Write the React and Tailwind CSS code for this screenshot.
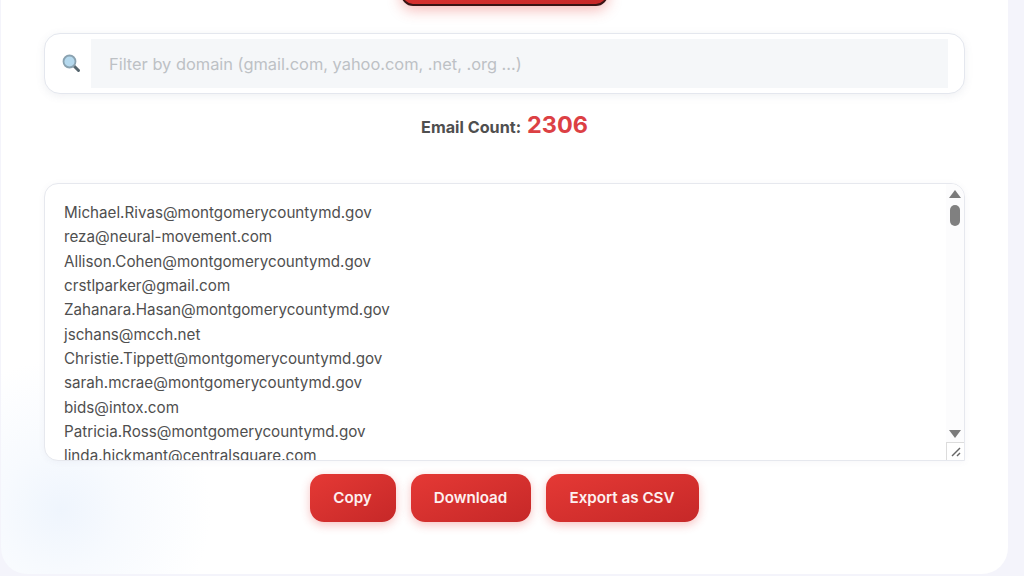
import { useState } from 'react';

const emails = [
  'Michael.Rivas@montgomerycountymd.gov',
  'reza@neural-movement.com',
  'Allison.Cohen@montgomerycountymd.gov',
  'crstlparker@gmail.com',
  'Zahanara.Hasan@montgomerycountymd.gov',
  'jschans@mcch.net',
  'Christie.Tippett@montgomerycountymd.gov',
  'sarah.mcrae@montgomerycountymd.gov',
  'bids@intox.com',
  'Patricia.Ross@montgomerycountymd.gov',
  'linda.hickmant@centralsquare.com',
];

const buttons = [
  { label: 'Copy', width: 'w-[86px]' },
  { label: 'Download', width: 'w-[120px]' },
  { label: 'Export as CSV', width: 'w-[153px]' },
];

const SearchEmoji = () => (
  <svg width="20" height="20" viewBox="0 0 20 20" className="mt-[-2px]">
    <line x1="12.5" y1="12.5" x2="17.5" y2="17.5" stroke="#56666e" strokeWidth="3" strokeLinecap="round" />
    <circle cx="8.5" cy="8.5" r="6" fill="#b5d9ee" stroke="#8aa2b0" strokeWidth="1.8" />
  </svg>
);

const App = () => {
  const [filter, setFilter] = useState('');

  return (
    <div className="h-[576px] w-[1024px] overflow-hidden bg-[#f4f4fb] font-['Inter',sans-serif]">
      {/* Main card */}
      <div className="ml-[1px] flex h-[574px] w-[1007px] flex-col items-center rounded-b-[26px] bg-white bg-[radial-gradient(circle_at_60px_510px,#eff5fd_0%,#f7fafe_60px,#ffffff_150px)] px-[43px]">
        <button className="ml-[-1px] mt-[-40px] h-[46px] w-[207px] shrink-0 rounded-[12px] border-2 border-[#3a1414] bg-gradient-to-br from-[#e53935] to-[#c62828] shadow-[0_4px_14px_rgba(229,57,53,0.35)]" />

        {/* Filter */}
        <div className="mt-[27px] flex h-[61px] w-[921px] shrink-0 items-center rounded-[16px] border border-[#e4e7ee] bg-white pl-[16px] pr-[16px] shadow-[0_2px_8px_rgba(100,110,140,0.1)]">
          <SearchEmoji />
          <input
            value={filter}
            onChange={(e) => setFilter(e.target.value)}
            placeholder="Filter by domain (gmail.com, yahoo.com, .net, .org ...)"
            className="ml-[10px] h-[49px] flex-1 bg-[#f5f7f9] pl-[18px] text-[16.4px] text-gray-700 outline-none placeholder:text-[#bdc1c5]"
          />
        </div>

        {/* Count */}
        <div className="mt-[15px] flex h-[32px] shrink-0 items-baseline gap-[6px]">
          <span className="text-[16.2px] font-bold text-[#4f4f4f]">Email Count:</span>
          <span className="text-[23.4px] font-bold leading-[32px] text-[#dc4044]">2306</span>
        </div>

        {/* List */}
        <div className="relative mt-[42px] h-[278px] w-[921px] shrink-0 overflow-hidden rounded-tl-[14px] rounded-tr-[14px] rounded-bl-[14px] border border-[#e6e8ee] bg-white pl-[19px] pt-[17px] shadow-[0_1px_6px_rgba(100,110,140,0.06)]">
          {emails.map((email) => (
            <div key={email} className="h-[24.35px] text-[15.2px] leading-[24.35px] text-[#4f4f4f]">
              {email}
            </div>
          ))}

          {/* Scrollbar */}
          <div className="absolute bottom-0 right-0 top-0 flex w-[18px] flex-col items-center bg-[#fcfcfd]">
            <div className="mt-[6px] h-0 w-0 border-x-[6px] border-b-[8px] border-x-transparent border-b-[#7b7b7b]" />
            <div className="mt-[7px] h-[21px] w-[10px] rounded-full bg-[#808080]" />
            <div className="mt-[204px] h-0 w-0 border-x-[6px] border-t-[8px] border-x-transparent border-t-[#7b7b7b]" />
          </div>
          <div className="absolute bottom-0 right-0 flex h-[18px] w-[18px] items-center justify-center border-l border-t border-[#dcdcdc] bg-white">
            <svg width="12" height="12" viewBox="0 0 12 12">
              <line x1="2" y1="10" x2="10" y2="2" stroke="#666" strokeWidth="1.4" />
              <line x1="7" y1="10" x2="10" y2="7" stroke="#666" strokeWidth="1.4" />
            </svg>
          </div>
        </div>

        {/* Actions */}
        <div className="mt-[13px] flex shrink-0 gap-[15px] pr-[1px]">
          {buttons.map((b) => (
            <button
              key={b.label}
              className={`${b.width} h-[48px] rounded-[14px] bg-gradient-to-br from-[#e53935] to-[#c62828] text-[15.2px] font-semibold text-[#fdf0f0] shadow-[0_3px_10px_rgba(229,57,53,0.3)]`}
            >
              {b.label}
            </button>
          ))}
        </div>
      </div>
    </div>
  );
};

export default App;
